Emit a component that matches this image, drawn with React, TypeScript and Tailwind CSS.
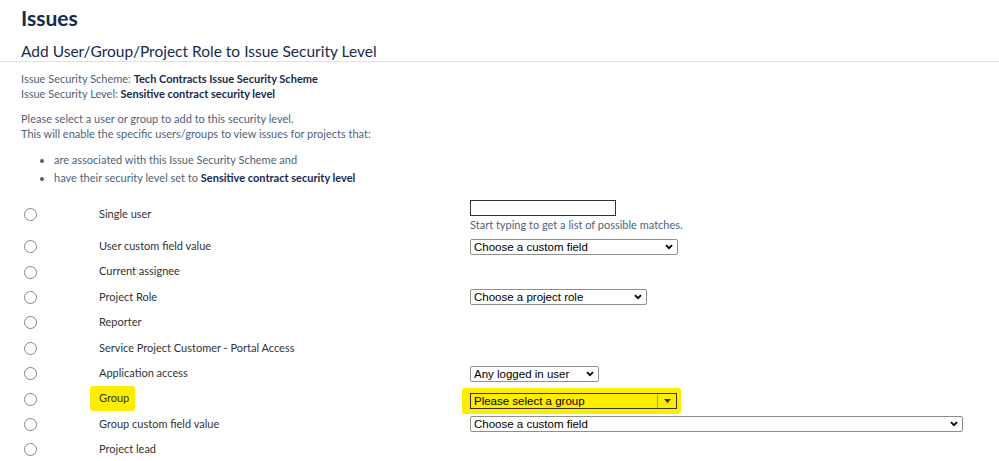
import { ReactNode } from "react";

const font = { fontFamily: 'Lato, "Noto Sans", sans-serif' };
const arial = { fontFamily: '"Liberation Sans", Arial, sans-serif' };

function Chevron() {
  return (
    <svg width="8" height="6" viewBox="0 0 8 6" className="text-black">
      <path d="M1 1.2 L4 4.2 L7 1.2" fill="none" stroke="currentColor" strokeWidth="1.8" />
    </svg>
  );
}

function FakeSelect({ label, width }: { label: string; width: string }) {
  return (
    <div className={`relative flex ${width}`}>
      <select
        defaultValue={label}
        className="block w-full h-[16px] appearance-none bg-white border border-[#8f8f8f] rounded-[2px] pl-[3px] pr-5 text-[11.5px] leading-[14px] text-black outline-none"
        style={arial}
      >
        <option>{label}</option>
      </select>
      <span className="absolute right-[5px] inset-y-0 pointer-events-none flex items-center">
        <Chevron />
      </span>
    </div>
  );
}

function Radio() {
  return <span className="block w-[13px] h-[13px] rounded-full border border-[#858585] bg-white" />;
}

function Row({
  label,
  children,
  tall,
  highlight,
}: {
  label: string;
  children?: ReactNode;
  tall?: boolean;
  highlight?: boolean;
}) {
  if (tall) {
    return (
      <div className="flex h-[36px]">
        <div className="w-[99px] pl-[24px] pt-[10px]">
          <Radio />
        </div>
        <div className="w-[371px] pt-[8px] text-[11px] leading-[16px] text-[#333]">{label}</div>
        <div className="flex-1 pt-[2px]">{children}</div>
      </div>
    );
  }
  return (
    <div className="flex h-[25.4px] items-center">
      <div className="w-[99px] pl-[24px] flex">
        <Radio />
      </div>
      <div className="w-[371px] flex items-center pb-[1px]">
        {highlight ? (
          <span className="inline-block bg-[#ffed00] -ml-[9px] pl-[9px] pr-[6px] py-[4px] -my-[4px] rounded-[3px] text-[11px] text-[#333]">
            {label}
          </span>
        ) : (
          <span className="text-[11px] text-[#333]">{label}</span>
        )}
      </div>
      <div className="flex-1">{children}</div>
    </div>
  );
}

export default function App() {
  return (
    <div className="w-[999px] h-[461px] bg-white overflow-hidden" style={font}>
      <div className="pl-[21px] pt-[5px]">
        <h1 className="text-[21px] leading-[26px] font-bold text-[#172b4d]">Issues</h1>
      </div>
      <div className="pl-[21px] mt-[10px] border-b border-[#dfe1e6]">
        <h2 className="text-[15.5px] leading-[20px] text-[#172b4d]">
          Add User/Group/Project Role to Issue Security Level
        </h2>
      </div>

      <div className="pl-[21px] pt-[9px] text-[11px] leading-[15px] text-[#505f79]">
        <p>
          Issue Security Scheme: <b className="text-[#172b4d]">Tech Contracts Issue Security Scheme</b>
        </p>
        <p>
          Issue Security Level: <b className="text-[#172b4d]">Sensitive contract security level</b>
        </p>
        <p className="mt-[10px]">Please select a user or group to add to this security level.</p>
        <p className="leading-[16px]">This will enable the specific users/groups to view issues for projects that:</p>
        <ul className="mt-[9px] pl-[33px] list-disc">
          <li className="leading-[18px]">are associated with this Issue Security Scheme and</li>
          <li className="leading-[18px]">
            have their security level set to <b className="text-[#172b4d]">Sensitive contract security level</b>
          </li>
        </ul>
      </div>

      <div className="mt-[11px]">
        <Row label="Single user" tall>
          <input
            className="block w-[146px] h-[16px] border border-[#333] outline-none bg-white"
            defaultValue=""
          />
          <div className="text-[11px] leading-[15px] mt-[1px] text-[#505f79]">
            Start typing to get a list of possible matches.
          </div>
        </Row>
        <Row label="User custom field value">
          <FakeSelect label="Choose a custom field" width="w-[208px]" />
        </Row>
        <Row label="Current assignee" />
        <Row label="Project Role">
          <FakeSelect label="Choose a project role" width="w-[177px]" />
        </Row>
        <Row label="Reporter" />
        <Row label="Service Project Customer - Portal Access" />
        <Row label="Application access">
          <FakeSelect label="Any logged in user" width="w-[129px]" />
        </Row>
        <Row label="Group" highlight>
          <div className="inline-block bg-[#ffed00] -ml-[8px] pl-[8px] pr-[4px] py-[5px] -my-[5px] rounded-[3px]">
            <div className="relative w-[207px] h-[16px] border border-[#333] bg-[#ffed00] flex items-center">
              <span className="pl-[3px] text-[11.5px] leading-[14px] text-black" style={arial}>
                Please select a group
              </span>
              <span className="absolute right-0 top-0 bottom-0 w-[19px] border-l border-[#b5a800] flex items-center justify-center">
                <svg width="7" height="4" viewBox="0 0 7 4">
                  <path d="M0 0 H7 L3.5 4 Z" fill="#333" />
                </svg>
              </span>
            </div>
          </div>
        </Row>
        <Row label="Group custom field value">
          <FakeSelect label="Choose a custom field" width="w-[493px]" />
        </Row>
        <Row label="Project lead" />
      </div>
    </div>
  );
}
